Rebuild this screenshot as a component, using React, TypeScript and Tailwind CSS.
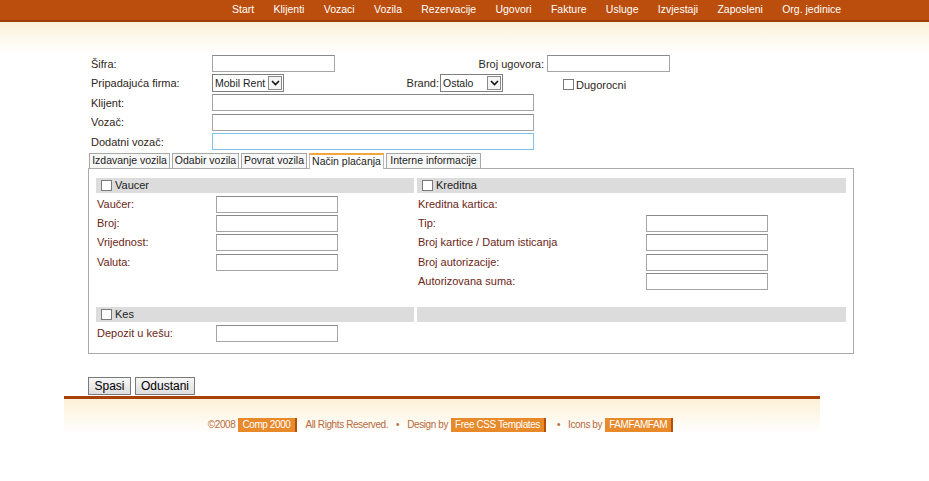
import React from "react";

const NAV = [
	"Start",
	"Klijenti",
	"Vozaci",
	"Vozila",
	"Rezervacije",
	"Ugovori",
	"Fakture",
	"Usluge",
	"Izvjestaji",
	"Zaposleni",
	"Org. jedinice",
];

const TABS = [
	{ label: "Izdavanje vozila", w: "w-[81px]" },
	{ label: "Odabir vozila", w: "w-[67px]" },
	{ label: "Povrat vozila", w: "w-[66px]" },
	{ label: "Način plaćanja", w: "w-[75px]", active: true },
	{ label: "Interne informacije", w: "w-[95px]" },
];

function TextBox({ className = "", focus = false }: { className?: string; focus?: boolean }) {
	return (
		<div
			className={`h-[17px] border bg-white ${
				focus ? "border-[#7ec4ea]" : "border-[#a5a5a5] border-t-[#8a8a8a]"
			} ${className}`}
		/>
	);
}

function Check() {
	return <span className="inline-block w-[11px] h-[11px] border border-[#7a7a7a] bg-white shrink-0" />;
}

function Select({ value, w }: { value: string; w: string }) {
	return (
		<div className={`flex items-center h-[18px] border border-[#7f7f7f] bg-white ${w}`}>
			<span className="flex-1 pl-[2px] leading-none whitespace-nowrap overflow-hidden text-[10.5px] text-[#222]">
				{value}
			</span>
			<span className="flex items-center justify-center w-[14px] h-[14px] mr-[1px] border border-[#8a8a8a] bg-[#f4f4f4] shrink-0">
				<svg width="9" height="6" viewBox="0 0 9 6">
					<path d="M1 1 L4.5 4.5 L8 1" fill="none" stroke="#111" strokeWidth="1.6" />
				</svg>
			</span>
		</div>
	);
}

function TopRow({ label, children }: { label: string; children: React.ReactNode }) {
	return (
		<div className="flex items-center h-[19.5px]">
			<span className="w-[121px] shrink-0">{label}</span>
			{children}
		</div>
	);
}

function Field({ label, labelW, box = true }: { label: string; labelW: string; box?: boolean }) {
	return (
		<div className="flex items-center h-[19.3px]">
			<span className={`${labelW} shrink-0 pl-[1px]`}>{label}</span>
			{box && <TextBox className="w-[122px]" />}
		</div>
	);
}

function Bar({ label }: { label?: string }) {
	return (
		<div className="flex items-center gap-[3px] h-[15px] bg-[#dcdcdc] pl-[5px] text-[#222]">
			{label && (
				<>
					<Check />
					<span>{label}</span>
				</>
			)}
		</div>
	);
}

function Badge({ children }: { children: React.ReactNode }) {
	return (
		<span className="inline-block px-[4px] py-[1px] mx-[3px] bg-[#e8892a] border-r-2 border-[#b4500f] text-white leading-[12px]">
			{children}
		</span>
	);
}

export default function App() {
	return (
		<div className="min-h-[481px] bg-white font-['Liberation_Sans',Arial,sans-serif] text-[11px] text-[#2e2620]">
			<div className="h-[22px] bg-[#bb4e0c] border-b-2 border-[#9e3e07] flex items-center pl-[232px] gap-[19.3px] text-white text-[10.5px]">
				{NAV.map((n) => (
					<span key={n}>{n}</span>
				))}
			</div>
			<div className="h-[32px] bg-gradient-to-b from-[#fcf2d9] to-white" />

			<div className="pl-[91px]">
				<TopRow label="Šifra:">
					<TextBox className="w-[123px]" />
					<span className="w-[212px] text-right pr-[3px]">Broj ugovora:</span>
					<TextBox className="w-[123px]" />
				</TopRow>
				<TopRow label="Pripadajuća firma:">
					<Select value="Mobil Rent" w="w-[72px]" />
					<span className="w-[156px] text-right pr-[1px]">Brand:</span>
					<Select value="Ostalo" w="w-[63px]" />
					<span className="ml-[60px] mt-[3px] flex items-center gap-[2px]">
						<Check />
						<span>Dugorocni</span>
					</span>
				</TopRow>
				<TopRow label="Klijent:">
					<TextBox className="w-[322px]" />
				</TopRow>
				<TopRow label="Vozač:">
					<TextBox className="w-[322px]" />
				</TopRow>
				<TopRow label="Dodatni vozač:">
					<TextBox className="w-[322px]" focus />
				</TopRow>
			</div>

			<div className="ml-[88px] w-[766px]">
				<div className="flex items-end gap-[2px] pl-[1px] h-[16px] text-[10.5px] text-[#222]">
					{TABS.map((t) => (
						<span
							key={t.label}
							className={`${t.w} text-center leading-[13px] border border-b-0 ${
								t.active
									? "h-[16px] bg-white border-[#b8b8b8] border-t-2 border-t-[#f2a63c] relative top-[1px]"
									: "h-[15px] bg-[#f7f7f7] border-[#a8a8a8]"
							}`}
						>
							{t.label}
						</span>
					))}
				</div>
				<div className="h-[186px] border border-[#ababab] px-[7px] pt-[9px] text-[#6b2616]">
					<div className="flex gap-[3px]">
						<div className="w-[318px]">
							<Bar label="Vaucer" />
							<div className="pt-[2px]">
								<Field label="Vaučer:" labelW="w-[120px]" />
								<Field label="Broj:" labelW="w-[120px]" />
								<Field label="Vrijednost:" labelW="w-[120px]" />
								<Field label="Valuta:" labelW="w-[120px]" />
							</div>
						</div>
						<div className="flex-1">
							<Bar label="Kreditna" />
							<div className="pt-[2px]">
								<Field label="Kreditna kartica:" labelW="w-[229px]" box={false} />
								<Field label="Tip:" labelW="w-[229px]" />
								<Field label="Broj kartice / Datum isticanja" labelW="w-[229px]" />
								<Field label="Broj autorizacije:" labelW="w-[229px]" />
								<Field label="Autorizovana suma:" labelW="w-[229px]" />
							</div>
						</div>
					</div>
					<div className="flex gap-[3px] mt-[16px]">
						<div className="w-[318px]">
							<Bar label="Kes" />
							<div className="pt-[2px]">
								<Field label="Depozit u kešu:" labelW="w-[120px]" />
							</div>
						</div>
						<div className="flex-1">
							<Bar />
						</div>
					</div>
				</div>
			</div>

			<div className="ml-[88px] mt-[23px] flex gap-[4px] text-[12px] text-black">
				<button className="w-[43px] h-[18px] border border-[#7a7a7a] bg-gradient-to-b from-[#f6f6f6] to-[#dedede] leading-none">
					Spasi
				</button>
				<button className="w-[60px] h-[18px] border border-[#7a7a7a] bg-gradient-to-b from-[#f6f6f6] to-[#dedede] leading-none">
					Odustani
				</button>
			</div>

			<div className="mx-[64px] mt-[1px] w-[756px] border-t-[3px] border-[#a8420b] h-[37px] bg-gradient-to-b from-[#fdf1d6] to-white flex items-end justify-center pb-[1px] text-[10px] tracking-[-0.4px] text-[#b86a3c]">
				<span>©2008</span>
				<Badge>Comp 2000</Badge>
				<span className="ml-[6px]">All Rights Reserved.</span>
				<span className="mx-[8px]">•</span>
				<span>Design by</span>
				<Badge>Free CSS Templates</Badge>
				<span className="mx-[8px]">•</span>
				<span>Icons by</span>
				<Badge>FAMFAMFAM</Badge>
			</div>
		</div>
	);
}
